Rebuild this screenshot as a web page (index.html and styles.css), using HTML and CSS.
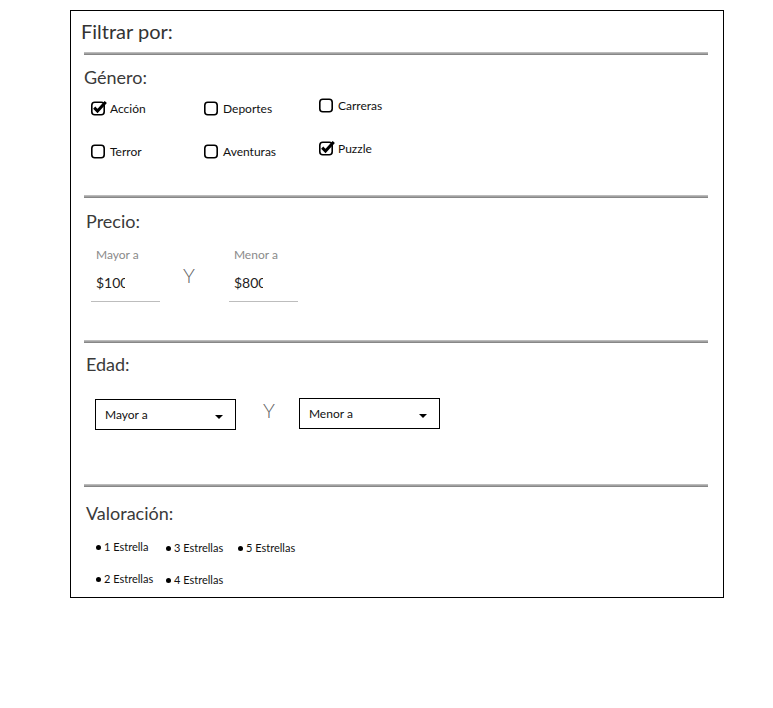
FILE: index.html
```html
<!DOCTYPE html>
<html>
<head>
  <title>Filtrar por</title>
  <meta charset="UTF-8">
  <link rel="stylesheet" href="styles.css">
</head>
<body>
  <div class="panel">
    <h1 class="panel-title">Filtrar por:</h1>
    <hr class="divider">

    <section class="group group-genre">
      <h2 class="group-title">Género:</h2>
      <div class="genre-grid">
        <div class="genre-col col-1">
          <label class="check">
            <svg class="check-icon" width="16" height="16" viewBox="0 0 16 16"><rect x="0.8" y="1.3" width="12.4" height="12.4" rx="3" fill="none" stroke="#000" stroke-width="1.6"/><path d="M3.2 6.6 L6.5 10 L14.8 1" fill="none" stroke="#000" stroke-width="3"/></svg>
            Acción
          </label>
          <label class="check">
            <svg class="check-icon" width="16" height="16" viewBox="0 0 16 16"><rect x="0.8" y="1.3" width="12.4" height="12.4" rx="3" fill="none" stroke="#000" stroke-width="1.6"/></svg>
            Terror
          </label>
        </div>
        <div class="genre-col col-2">
          <label class="check">
            <svg class="check-icon" width="16" height="16" viewBox="0 0 16 16"><rect x="0.8" y="1.3" width="12.4" height="12.4" rx="3" fill="none" stroke="#000" stroke-width="1.6"/></svg>
            Deportes
          </label>
          <label class="check">
            <svg class="check-icon" width="16" height="16" viewBox="0 0 16 16"><rect x="0.8" y="1.3" width="12.4" height="12.4" rx="3" fill="none" stroke="#000" stroke-width="1.6"/></svg>
            Aventuras
          </label>
        </div>
        <div class="genre-col col-3">
          <label class="check">
            <svg class="check-icon" width="16" height="16" viewBox="0 0 16 16"><rect x="0.8" y="1.3" width="12.4" height="12.4" rx="3" fill="none" stroke="#000" stroke-width="1.6"/></svg>
            Carreras
          </label>
          <label class="check">
            <svg class="check-icon" width="16" height="16" viewBox="0 0 16 16"><rect x="0.8" y="1.3" width="12.4" height="12.4" rx="3" fill="none" stroke="#000" stroke-width="1.6"/><path d="M3.2 6.6 L6.5 10 L14.8 1" fill="none" stroke="#000" stroke-width="3"/></svg>
            Puzzle
          </label>
        </div>
      </div>
    </section>
    <hr class="divider">

    <section class="group group-price">
      <h2 class="group-title">Precio:</h2>
      <div class="price-row">
        <div class="field">
          <span class="field-label">Mayor a</span>
          <span class="field-value">$100</span>
        </div>
        <span class="and and-price">Y</span>
        <div class="field">
          <span class="field-label">Menor a</span>
          <span class="field-value">$800</span>
        </div>
      </div>
    </section>
    <hr class="divider">

    <section class="group group-age">
      <h2 class="group-title">Edad:</h2>
      <div class="age-row">
        <div class="select select-first">
          <span>Mayor a</span>
          <span class="caret"></span>
        </div>
        <span class="and and-age">Y</span>
        <div class="select">
          <span>Menor a</span>
          <span class="caret"></span>
        </div>
      </div>
    </section>
    <hr class="divider">

    <section class="group group-rating">
      <h2 class="group-title">Valoración:</h2>
      <div class="rating-grid">
        <div class="rating-col col-a">
          <span class="radio">1 Estrella</span>
          <span class="radio">2 Estrellas</span>
        </div>
        <div class="rating-col col-b">
          <span class="radio">3 Estrellas</span>
          <span class="radio">4 Estrellas</span>
        </div>
        <div class="rating-col col-c">
          <span class="radio">5 Estrellas</span>
        </div>
      </div>
    </section>
  </div>
</body>
</html>
```

FILE: styles.css
```css
body {
  margin: 10px 0 0 70px;
  font-family: Lato, "Open Sans", sans-serif;
  background-color: #fff;
  color: #111;
}

.panel {
  width: 654px;
  height: 588px;
  border: 1px solid #000;
  box-sizing: border-box;
}

.panel-title {
  margin: 8px 0 9px 10px;
  font-size: 20px;
  line-height: 24px;
  font-weight: normal;
  color: #333;
}

.divider {
  margin: 0 0 0 13px;
  width: 624px;
  height: 3px;
  border: none;
  background: linear-gradient(#c8c8c8, #7a7a7a);
}

.group {
  padding-left: 15px;
}

.group-title {
  margin: 0;
  font-size: 18px;
  line-height: 22px;
  font-weight: normal;
  color: #3a3a3a;
}

/* genero */
.group-genre {
  padding: 11px 0 35px 13px;
}

.genre-grid {
  display: flex;
  margin: 13px 0 0 7px;
}

.genre-col {
  display: flex;
  flex-direction: column;
  gap: 27px;
}

.genre-col.col-1 {
  width: 113px;
}

.genre-col.col-2 {
  width: 115px;
}

.genre-col.col-3 {
  margin-top: -3px;
}

.check {
  display: flex;
  align-items: center;
  height: 16px;
  font-size: 12px;
  line-height: 16px;
  color: #111;
}

.check-icon {
  margin-right: 3px;
}

/* precio */
.group-price {
  padding-top: 12px;
  padding-bottom: 38px;
}

.price-row {
  display: flex;
  align-items: flex-start;
  margin: 15px 0 0 5px;
}

.field {
  display: flex;
  flex-direction: column;
  width: 69px;
  padding: 0 0 9px 5px;
  box-sizing: border-box;
  border-bottom: 1px solid #bdbdbd;
}

.field-label {
  font-size: 12px;
  line-height: 16px;
  color: #8a8a8a;
}

.field-value {
  margin-top: 11px;
  width: 29px;
  overflow: hidden;
  white-space: nowrap;
  font-size: 14px;
  line-height: 18px;
  color: #222;
}

.and {
  font-size: 20px;
  line-height: 24px;
  font-weight: 300;
  color: #666;
}

.and-price {
  margin: 16px 34px 0 23px;
}

/* edad */
.group-age {
  padding-top: 10px;
  padding-bottom: 54px;
}

.age-row {
  display: flex;
  align-items: flex-start;
  margin: 23px 0 0 9px;
}

.select {
  display: flex;
  align-items: center;
  justify-content: space-between;
  width: 141px;
  height: 31px;
  padding: 1px 12px 0 9px;
  box-sizing: border-box;
  border: 1px solid #000;
  font-size: 12px;
  line-height: 16px;
  color: #111;
}

.select-first {
  margin-top: 1px;
}

.caret {
  margin-top: 3px;
  width: 0;
  height: 0;
  border-left: 4.5px solid transparent;
  border-right: 4.5px solid transparent;
  border-top: 4px solid #000;
}

.and-age {
  margin: 0 24px 0 27px;
}

/* valoracion */
.group-rating {
  padding-top: 15px;
}

.rating-grid {
  display: flex;
  margin: 16px 0 0 10px;
}

.rating-col {
  display: flex;
  flex-direction: column;
  gap: 18px;
}

.rating-col.col-a {
  width: 70px;
}

.rating-col.col-b {
  width: 72px;
  margin-top: 1px;
}

.rating-col.col-c {
  margin-top: 1px;
}

.radio {
  display: flex;
  align-items: center;
  font-size: 11px;
  line-height: 14px;
  color: #111;
}

.radio::before {
  content: "";
  width: 5px;
  height: 5px;
  margin-right: 3px;
  border-radius: 50%;
  background-color: #000;
}
```
